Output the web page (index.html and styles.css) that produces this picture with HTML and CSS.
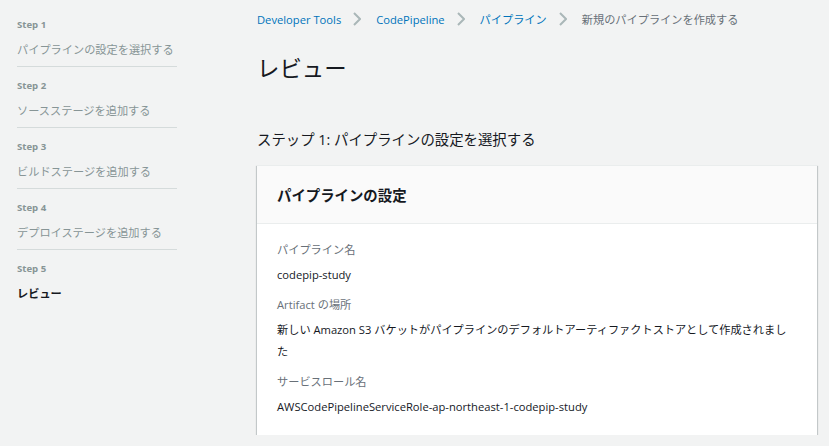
FILE: index.html
```html
<!DOCTYPE html>
<html lang="ja">
<head>
<meta charset="utf-8">
<link rel="stylesheet" href="styles.css">
</head>
<body>
<div class="layout">
  <nav class="steps">
    <div class="step">
      <div class="step-num">Step 1</div>
      <div class="step-title">パイプラインの設定を選択する</div>
    </div>
    <div class="step">
      <div class="step-num">Step 2</div>
      <div class="step-title">ソースステージを追加する</div>
    </div>
    <div class="step">
      <div class="step-num">Step 3</div>
      <div class="step-title">ビルドステージを追加する</div>
    </div>
    <div class="step">
      <div class="step-num">Step 4</div>
      <div class="step-title">デプロイステージを追加する</div>
    </div>
    <div class="step last">
      <div class="step-num">Step 5</div>
      <div class="step-title active">レビュー</div>
    </div>
  </nav>
  <main class="main">
    <div class="crumbs">
      <a class="crumb-link">Developer Tools</a>
      <svg class="chev" viewBox="0 0 8 14" width="8" height="14"><path d="M1 1l6 6-6 6" fill="none" stroke="#aab7b8" stroke-width="2"/></svg>
      <a class="crumb-link">CodePipeline</a>
      <svg class="chev" viewBox="0 0 8 14" width="8" height="14"><path d="M1 1l6 6-6 6" fill="none" stroke="#aab7b8" stroke-width="2"/></svg>
      <a class="crumb-link">パイプライン</a>
      <svg class="chev" viewBox="0 0 8 14" width="8" height="14"><path d="M1 1l6 6-6 6" fill="none" stroke="#aab7b8" stroke-width="2"/></svg>
      <span class="crumb-current">新規のパイプラインを作成する</span>
    </div>
    <h1 class="title">レビュー</h1>
    <h2 class="section">ステップ 1: パイプラインの設定を選択する</h2>
    <div class="card">
      <div class="card-head">パイプラインの設定</div>
      <div class="card-body">
        <div class="field">
          <div class="label">パイプライン名</div>
          <div class="value">codepip-study</div>
        </div>
        <div class="field">
          <div class="label">Artifact の場所</div>
          <div class="value">新しい Amazon S3 バケットがパイプラインのデフォルトアーティファクトストアとして作成されました</div>
        </div>
        <div class="field">
          <div class="label">サービスロール名</div>
          <div class="value">AWSCodePipelineServiceRole-ap-northeast-1-codepip-study</div>
        </div>
      </div>
    </div>
  </main>
</div>
</body>
</html>
```

FILE: styles.css
```css
html, body {
  margin: 0;
  padding: 0;
  background: #f2f3f3;
  font-family: "Open Sans", "Noto Sans CJK JP", sans-serif;
  color: #16191f;
}
.layout {
  display: flex;
  align-items: flex-start;
}
.steps {
  width: 160px;
  padding: 17px 0 0 17px;
  flex: none;
}
.step {
  border-bottom: 1px solid #d5dbdb;
  padding-bottom: 6px;
  margin-bottom: 11px;
}
.step.last {
  border-bottom: none;
}
.step-num {
  font-size: 9.6px;
  font-weight: 700;
  line-height: 16px;
  color: #879596;
}
.step-title {
  margin-top: 7px;
  font-size: 11.2px;
  line-height: 20px;
  color: #879596;
  white-space: nowrap;
}
.step-title.active {
  color: #16191f;
  font-weight: 700;
}
.main {
  margin-left: 80px;
  width: 560px;
  padding-top: 10px;
}
.crumbs {
  display: flex;
  align-items: center;
  height: 18px;
  font-size: 11.2px;
  white-space: nowrap;
}
.crumb-link {
  color: #0073bb;
}
.chev {
  margin: 0 15px 0 12px;
  flex: none;
}
.crumb-current {
  color: #687078;
}
.title {
  margin: 26px 0 0;
  font-size: 22.4px;
  line-height: 30px;
  font-weight: 400;
}
.section {
  margin: 46px 0 0;
  font-size: 14.4px;
  line-height: 20px;
  font-weight: 400;
}
.card {
  margin-top: 15px;
  background: #fff;
  border-top: 1px solid #eaeded;
  box-shadow: 0 1px 1px 0 rgba(0,28,36,.3), 1px 1px 1px 0 rgba(0,28,36,.15), -1px 1px 1px 0 rgba(0,28,36,.15);
}
.card-head {
  height: 57px;
  display: flex;
  align-items: center;
  padding: 0 20px;
  background: #fafafa;
  border-bottom: 1px solid #eaeded;
  font-size: 14.4px;
  font-weight: 700;
}
.card-body {
  padding: 15px 24px 17px 20px;
  display: flex;
  flex-direction: column;
  gap: 8px;
}
.field {
  display: flex;
  flex-direction: column;
  gap: 3px;
}
.label {
  font-size: 11.2px;
  line-height: 22px;
  color: #687078;
}
.value {
  font-size: 11.2px;
  line-height: 22px;
  color: #16191f;
}
```
